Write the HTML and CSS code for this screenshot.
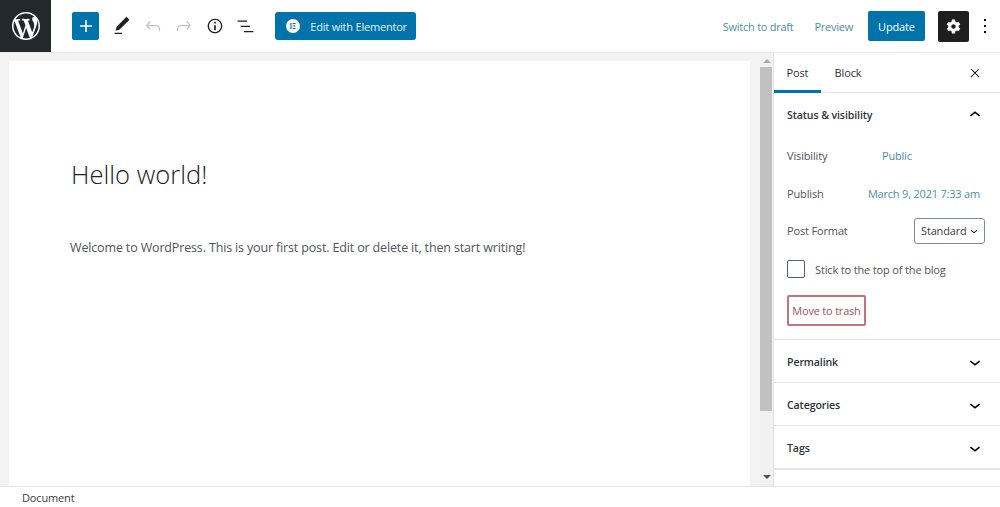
FILE: index.html
```html
<!DOCTYPE html>
<html lang="en">
<head>
<meta charset="utf-8">
<title>Edit Post</title>
<link rel="stylesheet" href="styles.css">
</head>
<body>
<div class="app">
  <header class="topbar">
    <a class="wp-logo"><svg viewBox="0 0 20 20" width="28" height="28"><path fill="#fff" d="M20 10c0-5.51-4.49-10-10-10C4.48 0 0 4.49 0 10c0 5.52 4.48 10 10 10 5.51 0 10-4.48 10-10zM7.78 15.37L4.37 6.22c.55-.02 1.17-.08 1.17-.08.5-.06.44-1.13-.06-1.11 0 0-1.45.11-2.37.11-.18 0-.37 0-.58-.01C4.12 2.69 6.87 1.11 10 1.11c2.33 0 4.45.87 6.05 2.34-.68-.11-1.65.39-1.65 1.58 0 .74.45 1.36.9 2.1.35.61.55 1.36.55 2.46 0 1.49-1.4 5-1.4 5l-3.03-8.37c.54-.02.82-.17.82-.17.5-.05.44-1.25-.06-1.22 0 0-1.44.12-2.38.12-.87 0-2.33-.12-2.33-.12-.5-.03-.56 1.2-.06 1.22l.92.08 1.26 3.41zM17.41 10c.24-.64.74-1.87.43-4.25.7 1.29 1.05 2.71 1.05 4.25 0 3.29-1.73 6.24-4.4 7.78.97-2.59 1.94-5.2 2.92-7.78zM6.1 18.09C3.12 16.65 1.11 13.53 1.11 10c0-1.3.23-2.48.72-3.59C3.25 10.3 4.67 14.2 6.1 18.09zm4.03-6.63l2.58 6.98c-.86.29-1.76.45-2.71.45-.79 0-1.57-.11-2.29-.33.81-2.38 1.62-4.74 2.42-7.1z"/></svg></a>
    <div class="tools">
      <button class="add-btn"><svg viewBox="0 0 24 24" width="24" height="24"><path fill="#fff" d="M18 11.2h-5.2V6h-1.6v5.2H6v1.6h5.2V18h1.6v-5.2H18z"/></svg></button>
      <span class="tool"><svg viewBox="0 0 24 24" width="22" height="22"><path d="M20.1 5.1L16.9 2 6.2 12.7l-1.3 4.4 4.5-1.3L20.1 5.1zM4 20.8h8v-1.5H4v1.5z"/></svg></span>
      <span class="tool muted"><svg viewBox="0 0 24 24" width="22" height="22"><path d="M18.3 11.7c-.6-.6-1.4-.9-2.3-.9H6.7l2.9-3.3-1.1-1-4.5 5L8.5 16l1-1-2.7-2.7H16c.5 0 .9.2 1.3.5 1 1 1 3.4 1 4.5v.3h1.5v-.2c0-1.5 0-4.3-1.5-5.7z"/></svg></span>
      <span class="tool muted"><svg viewBox="0 0 24 24" width="22" height="22"><path d="M15.6 6.5l-1.1 1 2.9 3.3H8c-.9 0-1.7.3-2.3.9-1.4 1.5-1.4 4.2-1.4 5.6v.2h1.5v-.3c0-1.1 0-3.5 1-4.5.3-.3.7-.5 1.3-.5h9.2L14.5 15l1 1.1 4-4.6-3.9-5z"/></svg></span>
      <span class="tool"><svg viewBox="0 0 24 24" width="20" height="20"><path d="M12 3.2c-4.8 0-8.8 3.9-8.8 8.8 0 4.8 3.9 8.8 8.8 8.8 4.8 0 8.8-3.9 8.8-8.8 0-4.8-4-8.8-8.8-8.8zm0 16c-4 0-7.2-3.3-7.2-7.2C4.8 8 8 4.8 12 4.8s7.2 3.3 7.2 7.2c0 4-3.2 7.2-7.2 7.2zM11 17h2v-6h-2v6zm0-8h2V7h-2v2z"/></svg></span>
      <span class="tool"><svg viewBox="0 0 24 24" width="21" height="21"><path d="M13.8 5.2H3v1.5h10.8V5.2zm-3.6 12v1.5H21v-1.5H10.2zm7.2-6H6.6v1.5h10.8v-1.5z"/></svg></span>
      <button class="elementor-btn"><span class="el-icon"><svg viewBox="0 0 14 14" width="14" height="14"><circle cx="7" cy="7" r="7" fill="#fff"/><path fill="#0073aa" d="M4.4 4h1.1v6H4.4zM6.6 4h3v1.1h-3zM6.6 6.4h3v1.1h-3zM6.6 8.9h3V10h-3z"/></svg></span><span>Edit with Elementor</span></button>
    </div>
    <div class="actions">
      <a class="link-btn">Switch to draft</a>
      <a class="link-btn">Preview</a>
      <button class="update-btn">Update</button>
      <button class="settings-btn"><svg viewBox="0 0 24 24" width="21" height="21"><path fill="#fff" d="M18 12c0-.3 0-.6-.1-.9l1.8-1.4-1.8-3-2.1.8c-.5-.4-1-.7-1.6-.9L13.8 4h-3.6l-.4 2.6c-.6.2-1.1.5-1.6.9l-2.1-.8-1.8 3 1.8 1.4c-.1.3-.1.6-.1.9s0 .6.1.9l-1.8 1.4 1.8 3 2.1-.8c.5.4 1 .7 1.6.9l.4 2.6h3.6l.4-2.6c.6-.2 1.1-.5 1.6-.9l2.1.8 1.8-3-1.8-1.4c.1-.3.1-.6.1-.9zm-6 2.6c-1.4 0-2.6-1.2-2.6-2.6s1.2-2.6 2.6-2.6 2.6 1.2 2.6 2.6-1.2 2.6-2.6 2.6z"/></svg></button>
      <span class="more"><svg viewBox="0 0 24 24" width="24" height="24"><path d="M13 19h-2v-2h2v2zm0-6h-2v-2h2v2zm0-6h-2V5h2v2z"/></svg></span>
    </div>
  </header>

  <div class="workspace">
    <main class="canvas-wrap">
      <article class="canvas">
        <h1 class="post-title">Hello world!</h1>
        <p class="post-body">Welcome to WordPress. This is your first post. Edit or delete it, then start writing!</p>
      </article>
    </main>
    <div class="scrollbar">
      <span class="arrow-up"></span>
      <span class="thumb"></span>
      <span class="arrow-down"></span>
    </div>
    <aside class="sidebar">
      <div class="tabs">
        <span class="tab active">Post</span>
        <span class="tab">Block</span>
        <span class="close"><svg viewBox="0 0 24 24" width="14" height="14"><path d="M13 11.8l6.1-6.3-1-1-6.1 6.2-6.1-6.2-1 1 6.1 6.3-6.5 6.7 1 1 6.5-6.6 6.5 6.6 1-1z"/></svg></span>
      </div>
      <section class="panel open">
        <div class="panel-head"><span>Status &amp; visibility</span><svg viewBox="0 0 24 24" width="22" height="22"><path d="M6.5 12.4L12 8l5.5 4.4-.9 1.2L12 10l-4.5 3.6-1-1.2z"/></svg></div>
        <div class="row"><span class="label">Visibility</span><a class="val">Public</a></div>
        <div class="row spread"><span>Publish</span><a class="val">March 9, 2021 7:33 am</a></div>
        <div class="row spread"><span>Post Format</span><span class="select">Standard<svg viewBox="0 0 24 24" width="14" height="14"><path d="M17.5 11.6L12 16l-5.5-4.4.9-1.2L12 14l4.5-3.6 1 1.2z"/></svg></span></div>
        <div class="row stick"><span class="check"></span><span>Stick to the top of the blog</span></div>
        <button class="trash">Move to trash</button>
      </section>
      <section class="panel closed"><div class="panel-head"><span>Permalink</span><svg viewBox="0 0 24 24" width="22" height="22"><path d="M17.5 11.6L12 16l-5.5-4.4.9-1.2L12 14l4.5-3.6 1 1.2z"/></svg></div></section>
      <section class="panel closed"><div class="panel-head"><span>Categories</span><svg viewBox="0 0 24 24" width="22" height="22"><path d="M17.5 11.6L12 16l-5.5-4.4.9-1.2L12 14l4.5-3.6 1 1.2z"/></svg></div></section>
      <section class="panel closed last"><div class="panel-head"><span>Tags</span><svg viewBox="0 0 24 24" width="22" height="22"><path d="M17.5 11.6L12 16l-5.5-4.4.9-1.2L12 14l4.5-3.6 1 1.2z"/></svg></div></section>
    </aside>
  </div>

  <footer class="statusbar">Document</footer>
</div>
</body>
</html>
```
FILE: styles.css
```css
* { box-sizing: border-box; }
html, body { margin: 0; height: 100%; }
body {
  font-family: "Open Sans", "Noto Sans", sans-serif;
  font-size: 11px;
  letter-spacing: -0.15px;
  color: #3c4043;
  background: #fff;
  overflow: hidden;
}
button { font: inherit; letter-spacing: inherit; border: 0; padding: 0; cursor: pointer; }
.app { display: flex; flex-direction: column; height: 507px; }

.topbar {
  height: 53px;
  flex: none;
  display: flex;
  align-items: flex-start;
  border-bottom: 1px solid #e8e8e8;
}
.wp-logo {
  width: 51px;
  height: 52px;
  background: #23282d;
  display: flex;
  align-items: center;
  justify-content: center;
}
.tools { display: flex; align-items: center; height: 52px; padding-left: 21px; }
.add-btn {
  width: 27px; height: 28px;
  background: #0073aa;
  border-radius: 2px;
  display: flex; align-items: center; justify-content: center;
  margin-right: 8px;
}
.tool { width: 30.75px; height: 24px; display: flex; align-items: center; justify-content: center; color: #1e1e1e; }
.tool svg { fill: currentColor; }
.tool.muted { color: #c4c4c4; }
.elementor-btn {
  margin-left: 14.5px;
  width: 141px; height: 28px;
  background: #0073aa;
  color: #e6f1f6;
  border-radius: 3px;
  display: flex; align-items: center;
  padding-left: 11px;
  gap: 10px;
  letter-spacing: -0.2px;
}
.el-icon { display: flex; }
.actions { margin-left: auto; display: flex; align-items: center; height: 52px; }
.link-btn { color: #4d8eab; letter-spacing: -0.25px; }
.link-btn + .link-btn { margin-left: 21px; }
.update-btn {
  margin-left: 15px;
  width: 57px; height: 30px;
  background: #0073aa;
  color: #fff;
  border-radius: 2px;
}
.settings-btn {
  margin-left: 13px;
  width: 31px; height: 31px;
  background: #1e1e1e;
  border-radius: 2px;
  display: flex; align-items: center; justify-content: center;
}
.more { width: 31px; display: flex; align-items: center; justify-content: center; }

.workspace { flex: 1; display: flex; min-height: 0; }
.canvas-wrap { width: 760px; flex: none; background: #f3f3f3; padding: 8px 10px 0 9px; }
.canvas { background: #fff; height: 100%; padding: 96px 61px 0 62px; }
.post-title {
  margin: 0 0 45px;
  font-size: 25.6px;
  font-weight: 300;
  line-height: 36px;
  letter-spacing: 0;
  color: #1e1e1e;
}
.post-body { margin: 0 0 0 -1px; font-size: 12.5px; letter-spacing: -0.15px; line-height: 20px; color: #50555a; }

.scrollbar {
  width: 13px; flex: none;
  background: #f1f1f1;
  display: flex; flex-direction: column; align-items: center;
}
.thumb { width: 12px; margin-right: 1px; height: 344px; background: #c1c1c1; margin-top: 4px; }
.arrow-up, .arrow-down { width: 0; height: 0; border-left: 4px solid transparent; border-right: 4px solid transparent; }
.arrow-up { margin-top: 6px; border-bottom: 4px solid #a8a8a8; }
.arrow-down { margin-top: auto; margin-bottom: 7px; border-top: 4px solid #505050; }

.sidebar { flex: 1; border-left: 1px solid #e2e4e7; background: #fff; }
.tabs {
  height: 40px;
  display: flex; align-items: center;
  border-bottom: 1px solid #e2e4e7;
}
.tab { height: 40px; display: flex; align-items: center; justify-content: center; color: #2c3338; padding-bottom: 1px; }
.tab:nth-child(1) { width: 47px; border-bottom: 3px solid #0073aa; padding-top: 3px; }
.tab:nth-child(2) { width: 54px; padding-bottom: 0; }
.close { margin-left: auto; margin-right: 18px; display: flex; }

.panel { border-bottom: 1px solid #e2e4e7; padding: 0 15px 0 13px; }
.panel-head {
  display: flex; justify-content: space-between; align-items: center;
  height: 42px;
  font-size: 10.6px;
  font-weight: 600;
  letter-spacing: -0.12px;
  color: #2c3338;
}
.panel-head svg { margin-right: -1px; }
.panel.open { height: 247px; }
.panel.open .panel-head { height: 44px; }
.panel.closed .panel-head { height: 42px; padding-top: 2px; }
.panel.last { border-bottom: 2px solid #e2e4e7; height: 44px; }
.row { display: flex; align-items: center; height: 37.5px; color: #50555a; }
.row .val { color: #4d8eab; letter-spacing: -0.2px; }
.label { width: 95px; }
.spread { justify-content: space-between; }
.spread .val { margin-right: 5px; }
.select {
  width: 71px; height: 26px;
  border: 1px solid #7e8993;
  border-radius: 3px;
  display: flex; align-items: center; justify-content: space-between;
  padding: 0 3px 0 6px;
  color: #3c4043;
}
.stick { gap: 10px; margin-top: 1px; }
.check { width: 18px; height: 18px; border: 1px solid #555d66; border-radius: 2px; }
.trash {
  margin-top: 7px;
  width: 79px; height: 31px;
  background: #fff;
  border: 2px solid #c4737c;
  border-radius: 2px;
  color: #a4525c;
  letter-spacing: -0.2px;
}
.statusbar {
  height: 21px; flex: none;
  border-top: 1px solid #e4e4e4;
  padding-left: 22px;
  display: flex; align-items: center;
  color: #3c4043;
}
```
